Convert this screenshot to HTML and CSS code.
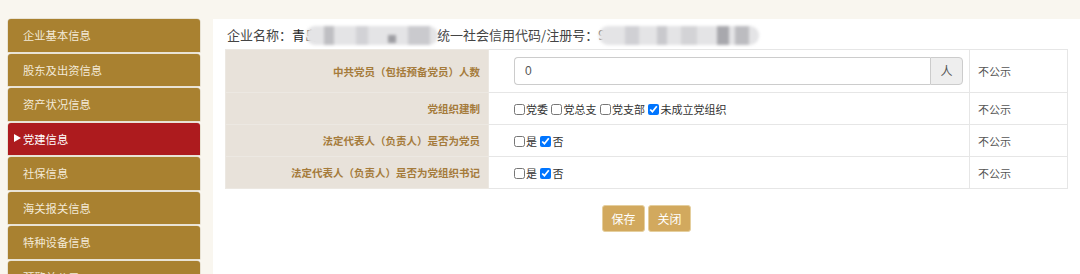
FILE: index.html
```html
<!DOCTYPE html>
<html lang="zh-CN">
<head>
    <meta charset="UTF-8">
    <title>党建信息</title>
    <link rel="stylesheet" href="styles.css">
</head>
<body>
    <div class="layout">
        <ul class="side-menu">
            <li class="menu-item">企业基本信息</li>
            <li class="menu-item">股东及出资信息</li>
            <li class="menu-item">资产状况信息</li>
            <li class="menu-item active">党建信息</li>
            <li class="menu-item">社保信息</li>
            <li class="menu-item">海关报关信息</li>
            <li class="menu-item">特种设备信息</li>
            <li class="menu-item">预警并公示</li>
        </ul>

        <div class="panel">
            <div class="company-line">
                <span>企业名称：</span><span class="strong">青岛</span><span class="mask mask-name"><i></i><i></i><i></i><i></i></span><span>统一社会信用代码/注册号：9</span><span class="mask mask-code"><i></i><i></i><i></i><i></i><i></i></span>
            </div>

            <table class="info-table">
                <tr class="row-tall">
                    <th>中共党员（包括预备党员）人数</th>
                    <td class="field">
                        <div class="input-group">
                            <input type="text" value="0">
                            <span class="addon">人</span>
                        </div>
                    </td>
                    <td class="public">不公示</td>
                </tr>
                <tr>
                    <th>党组织建制</th>
                    <td class="field">
                        <label><input type="checkbox">党委</label>
                        <label><input type="checkbox">党总支</label>
                        <label><input type="checkbox">党支部</label>
                        <label><input type="checkbox" checked>未成立党组织</label>
                    </td>
                    <td class="public">不公示</td>
                </tr>
                <tr>
                    <th>法定代表人（负责人）是否为党员</th>
                    <td class="field">
                        <label><input type="checkbox">是</label>
                        <label><input type="checkbox" checked>否</label>
                    </td>
                    <td class="public">不公示</td>
                </tr>
                <tr>
                    <th>法定代表人（负责人）是否为党组织书记</th>
                    <td class="field">
                        <label><input type="checkbox">是</label>
                        <label><input type="checkbox" checked>否</label>
                    </td>
                    <td class="public">不公示</td>
                </tr>
            </table>

            <div class="actions">
                <button class="btn">保存</button>
                <button class="btn">关闭</button>
            </div>
        </div>
    </div>
</body>
</html>
```

FILE: styles.css
```css
* {
    margin: 0;
    padding: 0;
    box-sizing: border-box;
}
body {
    background: #f9f6ef;
    font-family: "Noto Sans CJK SC", "Liberation Sans", sans-serif;
    font-size: 11px;
    color: #333;
    overflow: hidden;
}
.layout {
    display: flex;
    align-items: flex-start;
    padding: 19px 0 0 8px;
}
.side-menu {
    list-style: none;
    width: 192px;
    flex-shrink: 0;
}
.menu-item {
    position: relative;
    height: 32.5px;
    line-height: 32px;
    margin-bottom: 2px;
    padding-left: 15px;
    background: #a98130;
    color: #f3ead8;
    font-size: 11.3px;
    border-radius: 3px 3px 0 0;
    box-shadow: 0 0 0 0.5px #d9cfbc;
}
.menu-item.active {
    background: #ad1b1e;
    color: #fff;
}
.menu-item.active::before {
    content: "";
    position: absolute;
    left: 6px;
    top: 11px;
    border-left: 7px solid #fff;
    border-top: 4.5px solid transparent;
    border-bottom: 4.5px solid transparent;
}
.panel {
    flex: 1;
    margin-left: 13px;
    background: #fff;
    padding: 0 12px 40px;
    min-height: 260px;
}
.company-line {
    height: 30px;
    font-size: 13px;
    color: #444;
    padding-left: 2px;
    display: flex;
    align-items: center;
    white-space: nowrap;
}
.strong {
    color: #222;
}
.mask {
    display: flex;
    align-items: center;
    height: 19px;
    border-radius: 9px;
    background: #e4e4e6;
    filter: blur(1.5px);
    overflow: hidden;
    margin-top: 2px;
}
.mask i {
    display: block;
    height: 19px;
    background: #c8c8cc;
}
.mask-name {
    width: 132px;
    margin-left: -12px;
    margin-right: -1px;
}
.mask-name i:nth-child(1) { width: 10px; margin-left: 18px; background: #bfbfc3; }
.mask-name i:nth-child(2) { width: 12px; margin-left: 22px; background: #d2d2d6; }
.mask-name i:nth-child(3) { width: 8px; margin-left: 20px; background: #9d9da2; height: 8px; margin-top: 8px; }
.mask-name i:nth-child(4) { width: 22px; margin-left: 12px; background: #cacace; }
.mask-code {
    width: 160px;
    margin-left: -6px;
}
.mask-code i:nth-child(1) { width: 14px; margin-left: 26px; background: #d0d0d4; }
.mask-code i:nth-child(2) { width: 10px; margin-left: 18px; background: #c9c9cd; }
.mask-code i:nth-child(3) { width: 16px; margin-left: 14px; background: #d3d3d6; }
.mask-code i:nth-child(4) { width: 12px; margin-left: 20px; background: #a8a8ad; }
.mask-code i:nth-child(5) { width: 14px; margin-left: 6px; background: #bcbcc0; }
.info-table {
    width: 100%;
    border-collapse: collapse;
    table-layout: fixed;
}
.info-table th,
.info-table td {
    border: 1px solid #e6e6e6;
    height: 32px;
}
.info-table th {
    width: 263px;
    background: #e8e2da;
    color: #a57b3b;
    font-weight: bold;
    font-size: 10.5px;
    text-align: right;
    padding-right: 8px;
    border-color: #ece8e2;
}
.info-table .row-tall th,
.info-table .row-tall td {
    height: 43px;
}
.field {
    width: 481px;
    padding: 0 6px 0 25px;
    font-size: 11px;
    color: #333;
}
.public {
    padding-left: 8px;
    color: #555;
    font-size: 11px;
}
.field label {
    margin-right: 1px;
    white-space: nowrap;
}
.field input[type="checkbox"] {
    width: 11px;
    height: 11px;
    margin: 0 1px 0 0;
    vertical-align: -1px;
}
.input-group {
    display: flex;
    height: 28px;
}
.input-group input {
    flex: 1;
    border: 1px solid #ccc;
    border-right: none;
    border-radius: 4px 0 0 4px;
    padding-left: 10px;
    font-family: "Liberation Sans", sans-serif;
    font-size: 12px;
    color: #555;
    outline: none;
}
.addon {
    width: 33px;
    border: 1px solid #ccc;
    border-radius: 0 4px 4px 0;
    background: #eee;
    color: #555;
    text-align: center;
    line-height: 26px;
    font-size: 12px;
}
.actions {
    display: flex;
    justify-content: center;
    gap: 3px;
    margin-top: 16px;
}
.btn {
    width: 43px;
    height: 27px;
    border: 1px solid #e5cf9e;
    border-radius: 3px;
    background: #d2a95e;
    color: #fff;
    font-family: inherit;
    font-size: 12px;
    cursor: pointer;
}
```
